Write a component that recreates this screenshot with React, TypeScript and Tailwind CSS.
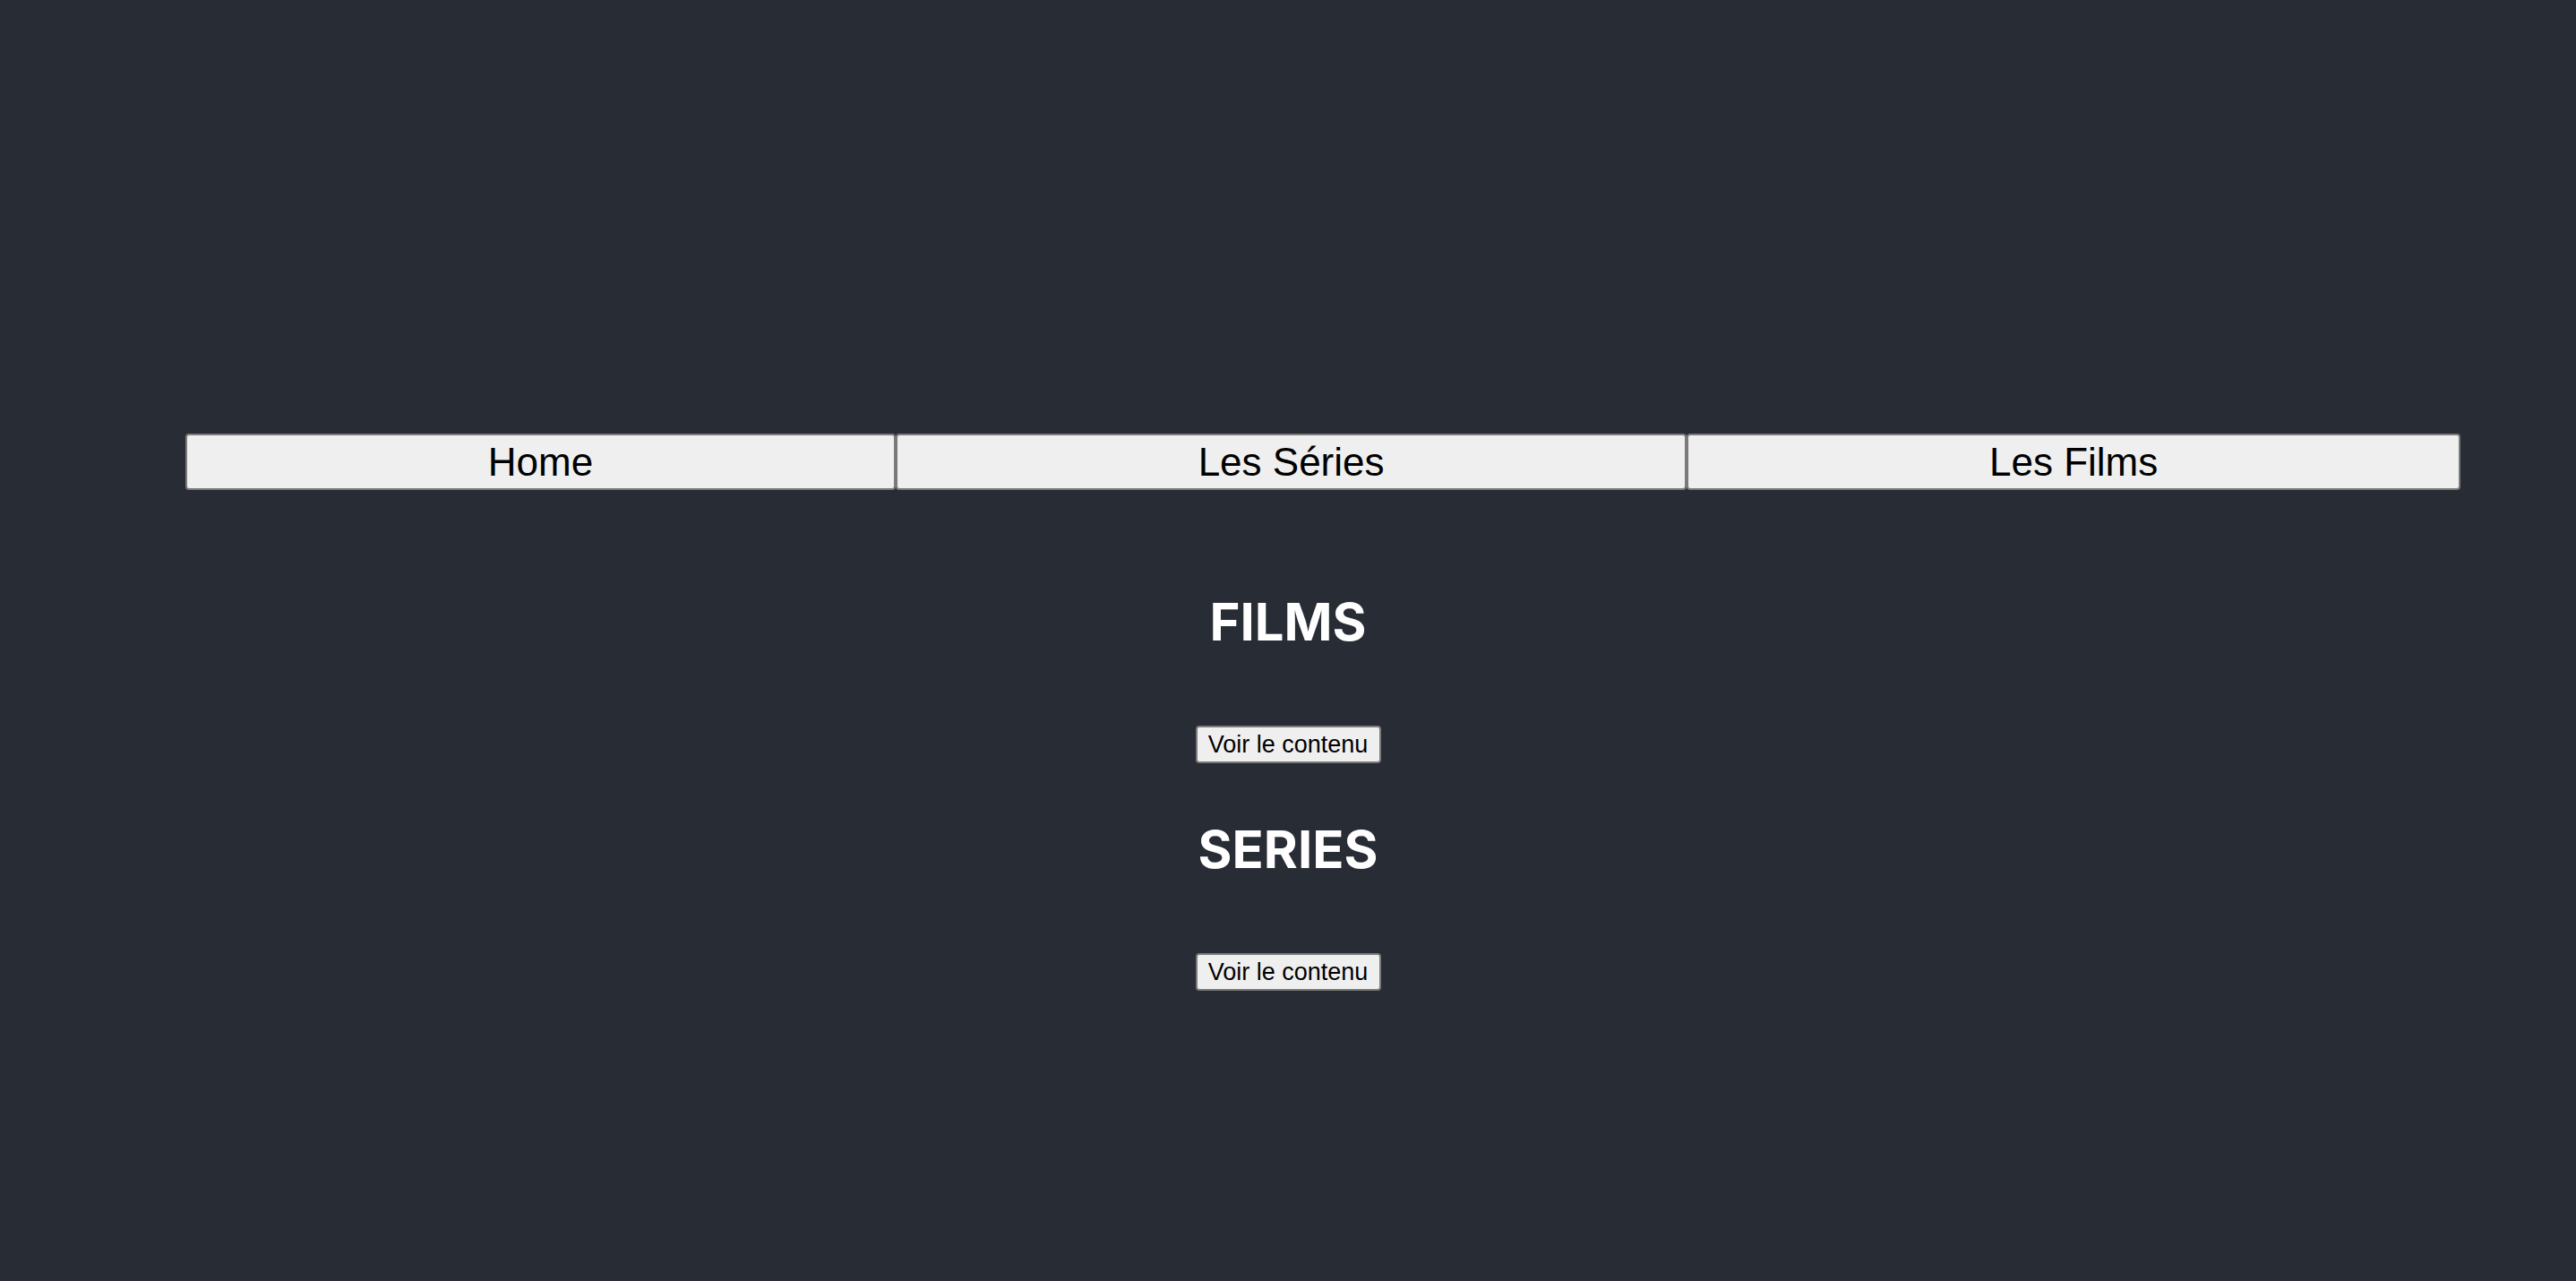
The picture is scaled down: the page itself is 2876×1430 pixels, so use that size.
import React from 'react';

const navItems = ['Home', 'Les Séries', 'Les Films'];

const sections = ['FILMS', 'SERIES'];

export default function App() {
  return (
    <div className="min-h-[1430px] w-full bg-[#282c34] font-['Liberation_Sans',Arial,sans-serif]">
      {/* Nav */}
      <nav className="flex pl-[207px] pr-[129px] pt-[484px]">
        {navItems.map((label) => (
          <button
            key={label}
            className="grow h-[63px] bg-[#efefef] border-2 border-[#7a7a7a] rounded-[4px] text-[44px] leading-none text-black"
          >
            {label}
          </button>
        ))}
      </nav>

      {/* Sections */}
      <main className="flex flex-col items-center pt-[112px]">
        {sections.map((title, i) => (
          <div key={title} className={`flex flex-col items-center ${i > 0 ? 'mt-[61px]' : ''}`}>
            <h1 className="font-['Inter',sans-serif] font-bold text-[58px] leading-[70px] text-white">{title}</h1>
            <button className="mt-[81px] h-[42px] w-[207px] bg-[#efefef] border-2 border-[#7a7a7a] rounded-[4px] text-[27px] leading-none text-black">
              Voir le contenu
            </button>
          </div>
        ))}
      </main>
    </div>
  );
}
